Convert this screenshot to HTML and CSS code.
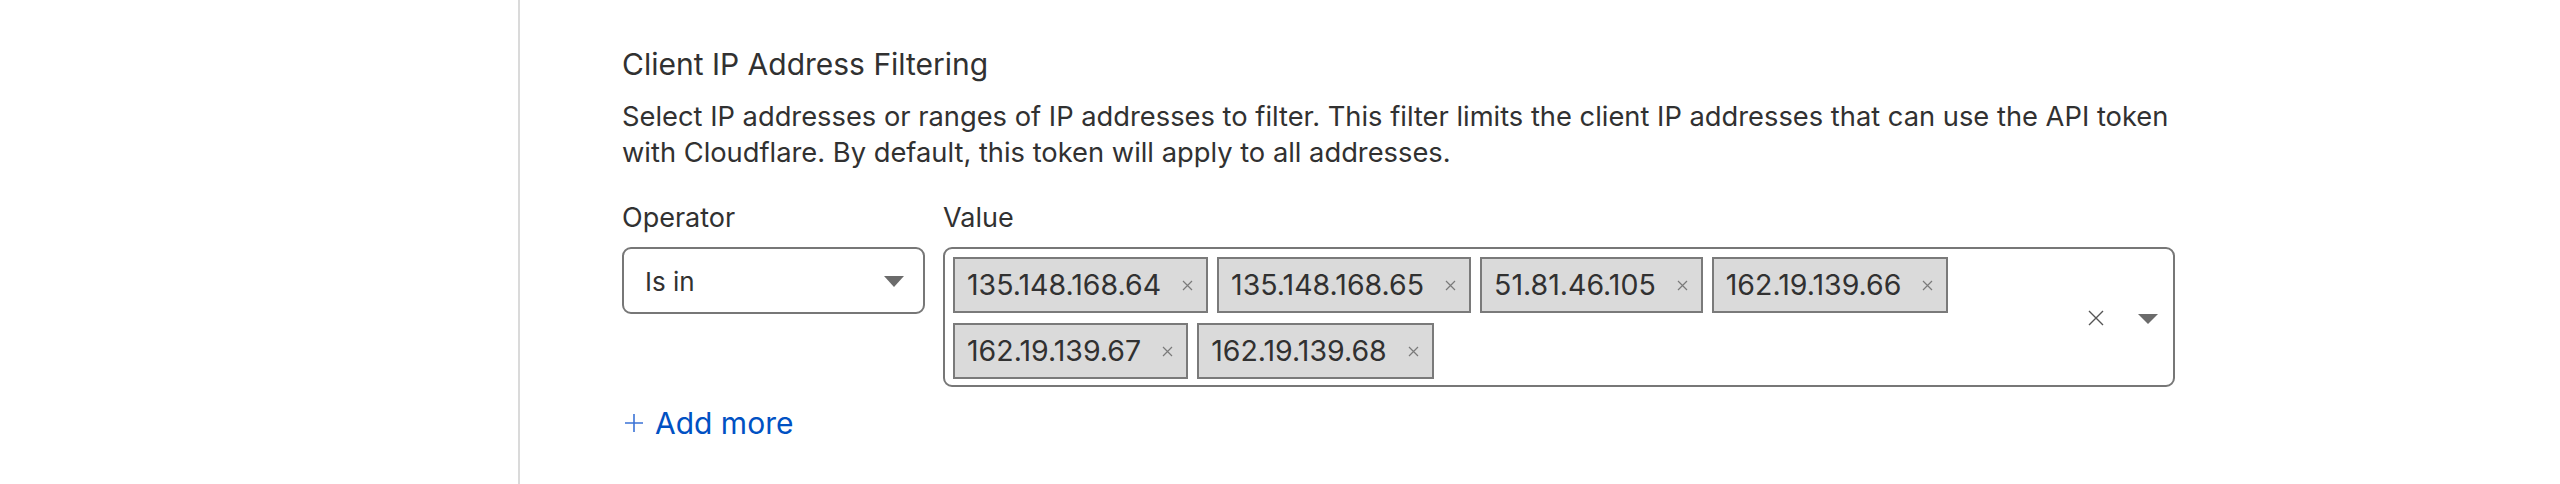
FILE: index.html
```html
<!DOCTYPE html>
<html lang="en">
<head>
    <meta charset="UTF-8">
    <title>API token - client IP filtering</title>
    <link rel="stylesheet" href="styles.css">
</head>
<body>
    <div class="page">
        <section class="panel">
            <h3 class="title">Client IP Address Filtering</h3>
            <p class="desc">Select IP addresses or ranges of IP addresses to filter. This filter limits the client IP addresses that can use the API token with Cloudflare. By default, this token will apply to all addresses.</p>

            <div class="fields">
                <div class="field operator">
                    <label class="label" for="op">Operator</label>
                    <div class="select" id="op">
                        <span class="select-value">Is in</span>
                        <span class="caret"></span>
                    </div>
                </div>
                <div class="field value">
                    <label class="label">Value</label>
                    <div class="multi">
                        <div class="tags">
                            <span class="tag">135.148.168.64<svg class="tag-x" viewBox="0 0 11 11"><path d="M1 1L10 10M10 1L1 10"/></svg></span>
                            <span class="tag">135.148.168.65<svg class="tag-x" viewBox="0 0 11 11"><path d="M1 1L10 10M10 1L1 10"/></svg></span>
                            <span class="tag">51.81.46.105<svg class="tag-x" viewBox="0 0 11 11"><path d="M1 1L10 10M10 1L1 10"/></svg></span>
                            <span class="tag">162.19.139.66<svg class="tag-x" viewBox="0 0 11 11"><path d="M1 1L10 10M10 1L1 10"/></svg></span>
                            <span class="tag">162.19.139.67<svg class="tag-x" viewBox="0 0 11 11"><path d="M1 1L10 10M10 1L1 10"/></svg></span>
                            <span class="tag">162.19.139.68<svg class="tag-x" viewBox="0 0 11 11"><path d="M1 1L10 10M10 1L1 10"/></svg></span>
                        </div>
                        <div class="controls">
                            <svg class="clear" viewBox="0 0 16 16"><path d="M1 1L15 15M15 1L1 15"/></svg>
                            <span class="caret"></span>
                        </div>
                    </div>
                </div>
            </div>

            <a class="add" href="#">
                <svg class="plus" viewBox="0 0 18 18"><path d="M9 0V18M0 9H18"/></svg>
                Add more
            </a>
        </section>
    </div>
</body>
</html>
```
FILE: styles.css
```css
body {
    margin: 0;
    background: #fff;
    color: #313131;
    font-family: Inter, "Noto Sans", sans-serif;
}
.page {
    padding-left: 518px;
    height: 484px;
    box-sizing: border-box;
}
.panel {
    height: 100%;
    border-left: 2px solid #dadada;
    padding: 46px 0 0 102px;
    box-sizing: border-box;
}
.title {
    margin: 0;
    font-size: 30px;
    font-weight: 400;
    line-height: 36px;
}
.desc {
    margin: 17px 0 0;
    width: 1560px;
    font-size: 27.3px;
    line-height: 36px;
}
.fields {
    display: flex;
    gap: 18px;
    margin-top: 29px;
}
.field {
    display: flex;
    flex-direction: column;
    gap: 11px;
}
.operator {
    width: 303px;
}
.value {
    width: 1232px;
}
.label {
    font-size: 27px;
    line-height: 36px;
}
.select {
    display: flex;
    align-items: center;
    justify-content: space-between;
    height: 67px;
    box-sizing: border-box;
    border: 2px solid #777;
    border-radius: 9px;
    padding: 2px 19px 0 21px;
}
.select-value {
    font-size: 26px;
}
.caret {
    width: 0;
    height: 0;
    border-left: 10.5px solid transparent;
    border-right: 10.5px solid transparent;
    border-top: 11px solid #6b6b6b;
}
.multi {
    display: flex;
    align-items: center;
    height: 140px;
    box-sizing: border-box;
    border: 2px solid #777;
    border-radius: 9px;
    padding: 8px 0 6px 8px;
}
.tags {
    flex: 1;
    align-self: flex-start;
    display: flex;
    flex-wrap: wrap;
    gap: 10px 9px;
}
.tag {
    display: flex;
    align-items: center;
    height: 56px;
    box-sizing: border-box;
    border: 2px solid #7a7a7a;
    background: #dadada;
    padding: 0 13px 0 12px;
    font-size: 28.5px;
    line-height: 52px;
}
.tag-x {
    width: 11px;
    height: 11px;
    margin-left: 21px;
    stroke: #7a7a7a;
    stroke-width: 1.2;
    fill: none;
}
.controls {
    display: flex;
    align-items: center;
    gap: 34px;
    padding: 0 15px 0 20px;
}
.clear {
    width: 16px;
    height: 16px;
    stroke: #555;
    stroke-width: 1.4;
    fill: none;
}
.controls .caret {
    border-left-width: 10px;
    border-right-width: 10px;
    border-top-width: 10px;
    margin-top: 1px;
}
.add {
    display: inline-flex;
    align-items: center;
    gap: 12px;
    margin-top: 18px;
    margin-left: 3px;
    font-size: 30px;
    line-height: 36px;
    color: #0051c3;
    text-decoration: none;
}
.plus {
    width: 18px;
    height: 18px;
    stroke: #3b73d6;
    stroke-width: 1.6;
    fill: none;
}
```
